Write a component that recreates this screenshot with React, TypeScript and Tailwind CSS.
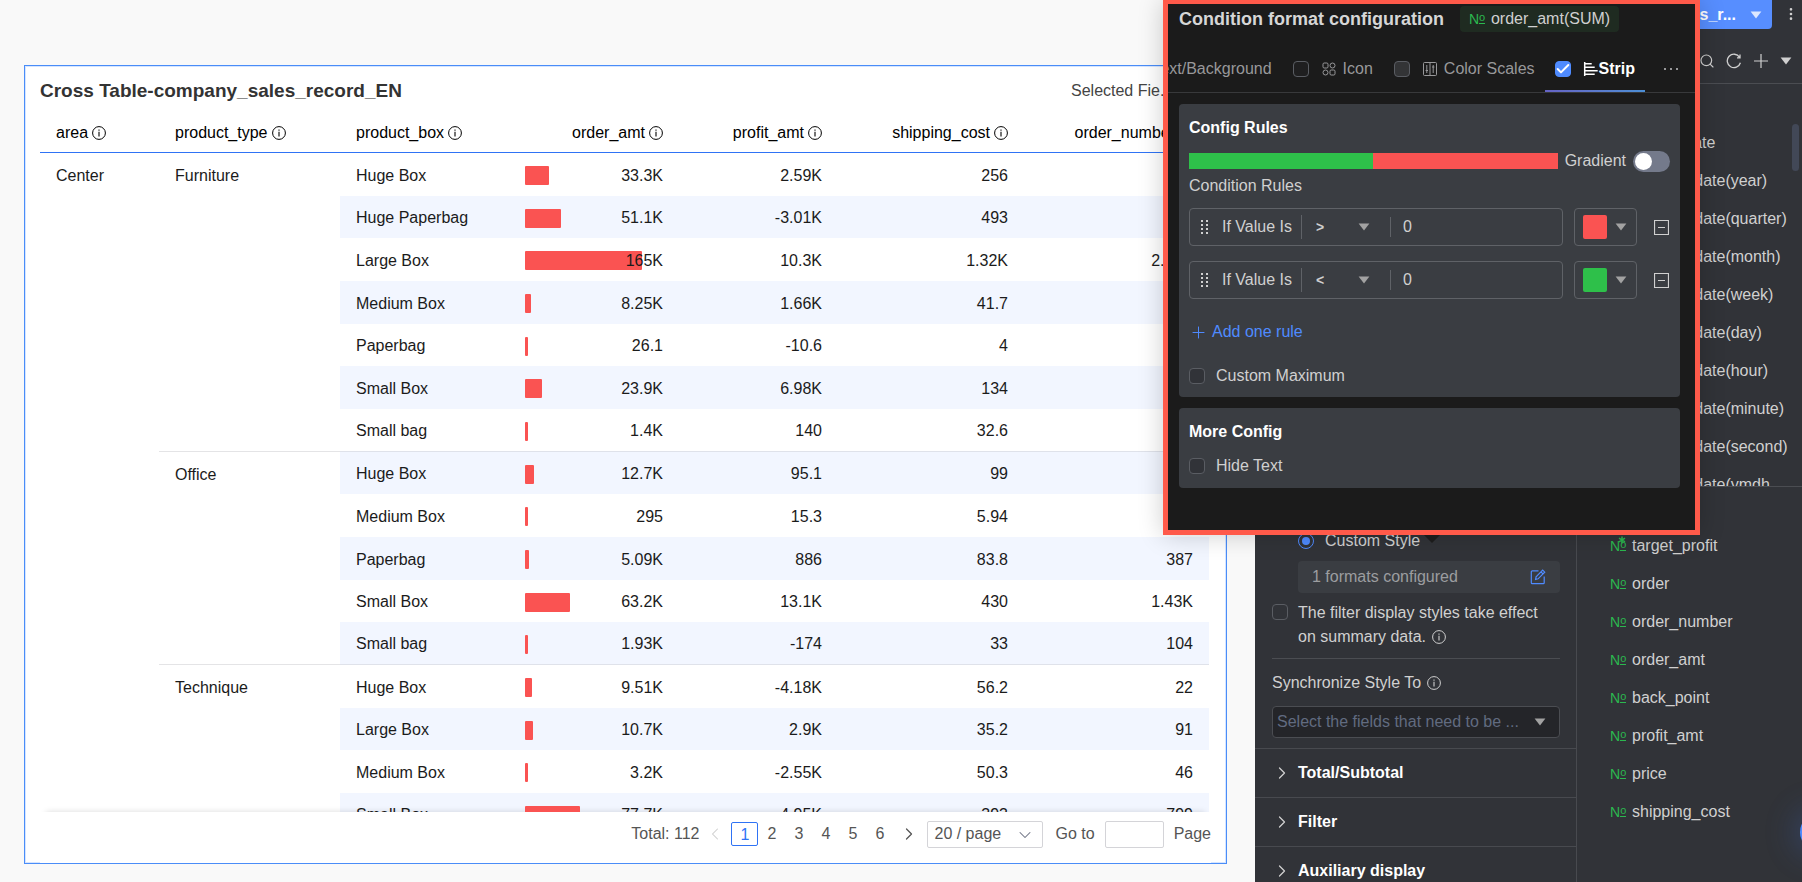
import { useState } from "react";
import clsx from "clsx";
import { Check, ChevronDown, ChevronLeft, ChevronRight, EllipsisVertical, Plus, Search } from "lucide-react";

type Row = { box: string; amt: string; bar: number; profit: string; cost: string; count: string };

const groups: Array<{ type: string; rows: Row[] }> = [
  {
    type: "Furniture",
    rows: [
      { box: "Huge Box", amt: "33.3K", bar: 33.3, profit: "2.59K", cost: "256", count: "" },
      { box: "Huge Paperbag", amt: "51.1K", bar: 51.1, profit: "-3.01K", cost: "493", count: "" },
      { box: "Large Box", amt: "165K", bar: 165, profit: "10.3K", cost: "1.32K", count: "2.94K" },
      { box: "Medium Box", amt: "8.25K", bar: 8.25, profit: "1.66K", cost: "41.7", count: "" },
      { box: "Paperbag", amt: "26.1", bar: 0.03, profit: "-10.6", cost: "4", count: "" },
      { box: "Small Box", amt: "23.9K", bar: 23.9, profit: "6.98K", cost: "134", count: "" },
      { box: "Small bag", amt: "1.4K", bar: 1.4, profit: "140", cost: "32.6", count: "" },
    ],
  },
  {
    type: "Office",
    rows: [
      { box: "Huge Box", amt: "12.7K", bar: 12.7, profit: "95.1", cost: "99", count: "" },
      { box: "Medium Box", amt: "295", bar: 0.3, profit: "15.3", cost: "5.94", count: "" },
      { box: "Paperbag", amt: "5.09K", bar: 5.09, profit: "886", cost: "83.8", count: "387" },
      { box: "Small Box", amt: "63.2K", bar: 63.2, profit: "13.1K", cost: "430", count: "1.43K" },
      { box: "Small bag", amt: "1.93K", bar: 1.93, profit: "-174", cost: "33", count: "104" },
    ],
  },
  {
    type: "Technique",
    rows: [
      { box: "Huge Box", amt: "9.51K", bar: 9.51, profit: "-4.18K", cost: "56.2", count: "22" },
      { box: "Large Box", amt: "10.7K", bar: 10.7, profit: "2.9K", cost: "35.2", count: "91" },
      { box: "Medium Box", amt: "3.2K", bar: 3.2, profit: "-2.55K", cost: "50.3", count: "46" },
      { box: "Small Box", amt: "77.7K", bar: 77.7, profit: "-4.95K", cost: "393", count: "799" },
    ],
  },
];

const columns = [
  { name: "area", width: "w-[119px]", right: false },
  { name: "product_type", width: "w-[181px]", right: false },
  { name: "product_box", width: "w-[169px]", right: false },
  { name: "order_amt", width: "w-[170px]", right: true },
  { name: "profit_amt", width: "w-[159px]", right: true },
  { name: "shipping_cost", width: "w-[186px]", right: true },
  { name: "order_number", width: "w-[185px]", right: true },
];

const dateFields = ["year", "quarter", "month", "week", "day", "hour", "minute", "second", "ymdh"];
const measures = ["order", "order_number", "order_amt", "back_point", "profit_amt", "price", "shipping_cost"];
const rowCount = groups.reduce((sum, group) => sum + group.rows.length, 0);
const maxBar = 165;

function InfoIcon() {
  return (
    <svg className="size-3.5 shrink-0" viewBox="0 0 14 14" fill="none" stroke="currentColor">
      <circle cx="7" cy="7" r="6.4" />
      <path d="M7 5.8v4.6M7 3.4v1.3" strokeWidth="1.1" />
    </svg>
  );
}

function Caret({ className }: { className?: string }) {
  return (
    <svg className={clsx("h-2 w-3 shrink-0", className)} viewBox="0 0 12 8" fill="currentColor">
      <path d="M.6.6h10.8L6 7.4z" />
    </svg>
  );
}

function NumberMark({ starred = false }: { starred?: boolean }) {
  return (
    <span className="relative flex w-4 shrink-0 items-start text-sm leading-4 text-[#2bb84f]">
      N<span className="border-b border-current text-[11px] leading-3">o</span>
      {starred && (
        <svg className="absolute -top-0.5 right-0 size-2" viewBox="0 0 8 8" stroke="currentColor" strokeWidth="1.5">
          <path d="M4 .5v7M1 2.2l6 3.6M7 2.2L1 5.8" />
        </svg>
      )}
    </span>
  );
}

function Checkbox({ id, checked = false, tone = "bg-[#313338]" }: { id: string; checked?: boolean; tone?: string }) {
  return (
    <span className="relative size-4 shrink-0">
      <input
        id={id}
        type="checkbox"
        defaultChecked={checked}
        className={clsx(
          "peer block size-4 appearance-none rounded-sm border border-[#5a5d63] checked:border-[#4f8bff] checked:bg-[#4f8bff]",
          tone,
        )}
      />
      <Check className="pointer-events-none absolute inset-0 hidden size-4 text-white peer-checked:block" strokeWidth={3} />
    </span>
  );
}

function CrossTable() {
  return (
    <table className="w-full table-fixed border-separate border-spacing-0 text-[#1b1b1b]">
      <thead>
        <tr className="h-[39px] text-black">
          {columns.map((col) => (
            <th key={col.name} className={clsx("border-b border-[#2f73f5] px-4 font-normal", col.width)}>
              <span className={clsx("flex items-center gap-1", col.right && "justify-end")}>
                {col.name}
                <InfoIcon />
              </span>
            </th>
          ))}
        </tr>
      </thead>
      <tbody>
        {groups.map((group, g) =>
          group.rows.map((row, r) => {
            const index = groups.slice(0, g).reduce((sum, item) => sum + item.rows.length, 0) + r;
            const last = r === group.rows.length - 1;
            const cell = clsx("px-4 pt-0.5", index % 2 === 1 && "bg-[#f2f6ff]", last && "border-b border-[#dfe2ea]");
            return (
              <tr key={`${group.type}-${row.box}`} className="h-[43px] nth-[3n+2]:h-[42px]">
                {index === 0 && (
                  <td rowSpan={rowCount} className="px-4 align-top leading-[45px]">
                    Center
                  </td>
                )}
                {r === 0 && (
                  <td rowSpan={group.rows.length} className="border-b border-[#e4e4e6] px-4 align-top leading-[45px]">
                    {group.type}
                  </td>
                )}
                <td className={cell}>{row.box}</td>
                <td className={cell}>
                  <div className="relative flex h-[19px] items-center justify-end">
                    <span
                      className="absolute inset-y-0 left-0 rounded-[1px] bg-[#fa5352]"
                      style={{ width: Math.max(3, Math.round((row.bar / maxBar) * 117)) }}
                    />
                    <span className="relative">{row.amt}</span>
                  </div>
                </td>
                <td className={clsx(cell, "text-right")}>{row.profit}</td>
                <td className={clsx(cell, "text-right")}>{row.cost}</td>
                <td className={clsx(cell, "text-right")}>{row.count}</td>
              </tr>
            );
          }),
        )}
      </tbody>
    </table>
  );
}

function Pagination() {
  const [page, setPage] = useState(1);

  return (
    <div className="flex h-[51px] shrink-0 items-start justify-end bg-white pt-2 text-[#555] shadow-[0_-6px_6px_-6px_rgba(0,0,0,0.15)]">
      <div className="flex h-7 items-center">
        <span>Total: 112</span>
        <button className="grid h-6 w-8 place-items-center text-[#ccc]" aria-label="Previous page">
          <ChevronLeft className="size-5" strokeWidth={1.25} />
        </button>
        {[1, 2, 3, 4, 5, 6].map((n) => (
          <button
            key={n}
            onClick={() => setPage(n)}
            className={clsx("h-6 w-[27px] rounded-xs", n === page && "border border-[#2f73f5] text-[#2f73f5]")}
          >
            {n}
          </button>
        ))}
        <button className="grid h-6 w-8 place-items-center" aria-label="Next page">
          <ChevronRight className="size-5" strokeWidth={1.5} />
        </button>
        <span className="relative ml-0.5">
          <select
            aria-label="Page size"
            className="block h-[27px] w-[116px] appearance-none rounded-xs border border-[#d4d4d8] bg-white px-1.5 leading-6"
          >
            <option>20 / page</option>
          </select>
          <ChevronDown className="pointer-events-none absolute top-1 right-2 size-5 text-[#6b7080]" strokeWidth={1.25} />
        </span>
        <label htmlFor="goto" className="ml-3">
          Go to
        </label>
        <input id="goto" className="mx-2.5 h-[27px] w-[59px] rounded-xs border border-[#d4d4d8] bg-white" />
        <span>Page</span>
      </div>
    </div>
  );
}

function Canvas() {
  return (
    <main className="flex min-w-0 flex-1 bg-[#f9f9f9] pt-[65px] pr-7 pb-[18px] pl-6">
      <section className="flex min-w-0 flex-1 flex-col border border-[#4a8df8] bg-white px-[15px] shadow-[inset_0_0_0_1px_#d6e5ff]">
        <header className="flex h-12 shrink-0 items-center justify-between pt-0.5">
          <h1 className="text-[19px] font-bold text-[#333]">Cross Table-company_sales_record_EN</h1>
          <div className="w-[140px] text-[#444]">Selected Fie...</div>
        </header>
        <div className="min-h-0 flex-1 overflow-hidden pr-0.5">
          <CrossTable />
        </div>
        <Pagination />
      </section>
    </main>
  );
}

function StylePanel() {
  return (
    <aside className="flex w-[322px] shrink-0 flex-col border-r border-[#484a4f] pt-[529px]">
      <div className="pr-4 pl-[17px]">
        <label className="flex h-6 items-center gap-[11px] pl-[26px]">
          <input
            type="radio"
            name="style"
            defaultChecked
            className="size-4 appearance-none rounded-full border border-[#4f8bff] bg-[#4f8bff] bg-clip-content p-[3px]"
          />
          Custom Style
        </label>
        <div className="mt-2 ml-[26px] flex h-8 items-center justify-between rounded-sm bg-[#3a3d42] px-3.5 text-[#9c9da0]">
          1 formats configured
          <button aria-label="Edit formats" className="text-[#4f8bff]">
            <svg className="size-4" viewBox="0 0 16 16" fill="none" stroke="currentColor" strokeWidth="1.2">
              <path d="M8.5 1.8H2.2a.9.9 0 0 0-.9.9v11.1c0 .5.4.9.9.9h11.1c.5 0 .9-.4.9-.9V7.5" />
              <path d="M5.6 10.4l.5-2.6 6.6-6.6 2 2-6.6 6.6zM11 2.9l2 2" />
            </svg>
          </button>
        </div>
        <div className="mt-2 flex gap-2.5 leading-6">
          <span className="pt-[3px]">
            <Checkbox id="summary" />
          </span>
          <label htmlFor="summary">
            The filter display styles take effect
            <span className="flex items-center gap-1.5">
              on summary data. <InfoIcon />
            </span>
          </label>
        </div>
        <div className="mt-[9px] border-t border-[#4b4d52] pt-3 pb-2.5">
          <label htmlFor="sync" className="flex h-6 items-center gap-1.5">
            Synchronize Style To <InfoIcon />
          </label>
          <div className="relative mt-[11px]">
            <select
              id="sync"
              className="h-8 w-full appearance-none rounded-sm border border-[#4b4d52] bg-[#242529] pr-8 pl-1 text-[#616b80]"
            >
              <option>Select the fields that need to be ...</option>
            </select>
            <Caret className="pointer-events-none absolute top-3 right-3.5 text-[#a2a2a2]" />
          </div>
        </div>
      </div>
      {["Total/Subtotal", "Filter", "Auxiliary display"].map((name) => (
        <button
          key={name}
          className="flex h-[49px] shrink-0 items-center gap-1.5 border-t border-[#484a4f] pl-[17px] text-left font-bold text-white"
        >
          <ChevronRight className="size-5 text-[#d0d0d0]" strokeWidth={1.5} />
          {name}
        </button>
      ))}
    </aside>
  );
}

function FieldsPanel() {
  return (
    <aside className="flex w-[225px] shrink-0 flex-col">
      <div className="flex h-[29px] shrink-0 items-start justify-between pr-[3px]">
        <button className="flex h-[29px] w-[195px] items-center justify-end gap-3.5 rounded-b bg-[#578eff] pr-2.5 font-bold text-white">
          sales_r...
          <Caret className="text-[#dce7ff]" />
        </button>
        <button aria-label="More" className="h-[27px]">
          <EllipsisVertical className="size-4" />
        </button>
      </div>
      <div className="flex h-[55px] shrink-0 items-center justify-end gap-[11px] border-b border-[#4b4d52] pt-2.5 pr-2.5">
        <button aria-label="Search">
          <Search className="size-4" strokeWidth={1.75} />
        </button>
        <button aria-label="Refresh">
          <svg className="size-4" viewBox="0 0 16 16" fill="none" stroke="currentColor" strokeWidth="1.3">
            <path d="M14.4 9.8A6.7 6.7 0 1 1 13.6 4.3M14 1.6v3.2h-3" />
          </svg>
        </button>
        <button aria-label="Add">
          <svg className="size-4" viewBox="0 0 16 16" stroke="currentColor" strokeWidth="1.2">
            <path d="M8 1v14M1 8h14" />
          </svg>
        </button>
        <button aria-label="Options">
          <Caret />
        </button>
      </div>
      <div className="flex h-[403px] shrink-0 justify-between overflow-hidden border-b border-[#4b4d52] pr-[3px]">
        <ul className="pt-10 pl-[61px] leading-[38px]">
          <li>order_date</li>
          {dateFields.map((name) => (
            <li key={name} className="whitespace-nowrap pl-2.5">
              {name === "ymdh" ? "order_date(ymdh" : `order_date(${name})`}
            </li>
          ))}
        </ul>
        <div className="mt-10 h-[47px] w-[7px] shrink-0 rounded-full bg-[#424857]" />
      </div>
      <ul className="pt-10 pl-[33px] leading-[38px]">
        <li className="flex items-center gap-1.5">
          <NumberMark starred />
          target_profit
        </li>
        {measures.map((name) => (
          <li key={name} className="flex items-center gap-1.5">
            <NumberMark />
            {name}
          </li>
        ))}
      </ul>
    </aside>
  );
}

function Rule({ op, swatch }: { op: string; swatch: string }) {
  return (
    <div className="flex items-center">
      <div className="flex h-[38px] min-w-0 flex-1 items-center rounded-sm border border-[#5f6267]">
        <svg className="ml-2.5 h-4 w-2 shrink-0" viewBox="0 0 8 16" fill="currentColor">
          {[1, 5, 9, 13].map((y) => (
            <path key={y} d={`M1 ${y}h2v2H1zM6 ${y}h2v2H6z`} />
          ))}
        </svg>
        <span className="ml-3.5 w-20 border-r border-[#5f6267] whitespace-nowrap">If Value Is</span>
        <span className="relative w-[89px] border-r border-[#5f6267]">
          <select aria-label="Operator" defaultValue={op} className="block w-full appearance-none bg-transparent pl-3.5 text-sm leading-5 font-bold">
            <option>&gt;</option>
            <option>&lt;</option>
          </select>
          <Caret className="pointer-events-none absolute top-1.5 right-5 text-[#a2a2a2]" />
        </span>
        <input aria-label="Value" defaultValue="0" className="min-w-0 flex-1 bg-transparent px-3 outline-none" />
      </div>
      <button
        aria-label="Strip color"
        className="ml-[11px] flex h-[38px] w-[63px] items-center gap-2 rounded-sm border border-[#5f6267] pl-2 text-[#a2a2a2]"
      >
        <span className={clsx("size-6 rounded-xs", swatch)} />
        <Caret />
      </button>
      <button aria-label="Remove rule" className="ml-[17px]">
        <svg className="size-[15px]" viewBox="0 0 15 15" fill="none" stroke="currentColor">
          <path d="M.5.5h14v14H.5zM4 7.5h7" strokeWidth="1.2" />
        </svg>
      </button>
    </div>
  );
}

function ConditionDialog() {
  return (
    <div
      role="dialog"
      aria-label="Condition format configuration"
      className="absolute top-0 right-[102px] h-[535px] w-[537px] border-[5px] border-t-4 border-[#ff5a4a] bg-[#1b1b1b] shadow-[0_0_24px_rgba(0,0,0,0.2)]"
    >
      <div className="flex h-[30px] items-center gap-4 pl-[11px]">
        <h2 className="text-lg font-bold whitespace-nowrap text-[#d6d6d6]">Condition format configuration</h2>
        <span className="flex h-[26px] items-center gap-1.5 rounded-sm bg-[#1f2b21] px-[9px]">
          <NumberMark />
          order_amt(SUM)
        </span>
      </div>
      <div className="mt-2 flex h-[51px] items-stretch justify-end overflow-hidden border-b border-[#38393b] pt-1 pr-4 whitespace-nowrap text-[#98989a]">
        <div className="flex shrink-0 items-center gap-3.5 px-2.5">
          <Checkbox id="tab-text" />
          <label htmlFor="tab-text">Text/Background</label>
        </div>
        <div className="flex shrink-0 items-center gap-[13px] px-[11px]">
          <Checkbox id="tab-icon" tone="bg-[#1f1f20]" />
          <label htmlFor="tab-icon" className="flex items-center gap-[7px]">
            <svg className="size-3.5" viewBox="0 0 14 14" fill="none" stroke="currentColor">
              <rect x="1" y="1" width="5" height="5" rx="1.2" />
              <circle cx="10.5" cy="3.5" r="2.5" />
              <circle cx="3.5" cy="10.5" r="2.5" />
              <rect x="8" y="8" width="5" height="5" rx="1.2" />
            </svg>
            Icon
          </label>
        </div>
        <div className="flex shrink-0 items-center gap-[13px] px-2.5">
          <Checkbox id="tab-scales" tone="bg-[#333436]" />
          <label htmlFor="tab-scales" className="flex items-center gap-[7px]">
            <svg className="size-3.5" viewBox="0 0 14 14" fill="none" stroke="currentColor">
              <rect x=".5" y=".5" width="13" height="13" rx="1" />
              <path d="M3.8 3v8M7 .5v13M10.2 3v8M2.6 8.5H5M9 5h2.4" />
            </svg>
            Color Scales
          </label>
        </div>
        <div className="relative flex shrink-0 items-center gap-3 px-2.5">
          <Checkbox id="tab-strip" checked />
          <label htmlFor="tab-strip" className="flex items-center font-bold text-white">
            <svg className="h-3.5 w-4" viewBox="0 0 16 14" fill="none" stroke="currentColor" strokeWidth="1.5">
              <path d="M1.7 0v14M1.7 1.7h7M1.7 5.2h10M1.7 8.7h13M1.7 12.3h10" />
            </svg>
            Strip
          </label>
          <span className="absolute inset-x-0 bottom-0 h-0.5 bg-linear-to-r from-[#6563c4] to-[#4b8fd6]" />
        </div>
        <button aria-label="More tabs" className="ml-[18px]">
          <svg className="h-1 w-4" viewBox="0 0 16 4" fill="currentColor">
            <path d="M1 1h2v2H1zM7 1h2v2H7zM13 1h2v2h-2z" />
          </svg>
        </button>
      </div>

      <div className="grid grid-cols-1 gap-[11px] pt-[11px] pr-[15px] pl-[11px]">
        <section className="flex h-[293px] flex-col rounded-sm bg-[#3a3d42] px-2.5 pt-3">
          <h3 className="leading-6 font-bold text-white">Config Rules</h3>
          <div className="mt-2.5 flex h-[22px] items-center">
            <div className="flex h-4 flex-1">
              <span className="flex-1 bg-[#2ec04a]" />
              <span className="flex-1 bg-[#fa5352]" />
            </div>
            <label htmlFor="gradient" className="mx-[7px]">
              Gradient
            </label>
            <span className="relative h-[21px] w-[37px]">
              <input id="gradient" type="checkbox" role="switch" className="peer block h-full w-full appearance-none rounded-full bg-[#747a8b]" />
              <span className="pointer-events-none absolute top-0.5 left-0.5 size-[17px] rounded-full bg-white peer-checked:left-[18px]" />
            </span>
          </div>
          <p className="mt-0.5 h-[26px] leading-6">Condition Rules</p>
          <div className="mt-2 grid grid-cols-1 gap-[15px] pr-px">
            <Rule op=">" swatch="bg-[#fa5352]" />
            <Rule op="<" swatch="bg-[#2ec04a]" />
          </div>
          <button className="mt-[21px] flex h-6 items-center gap-1 text-[#4f8bff]">
            <Plus className="size-[19px]" strokeWidth={1.25} />
            Add one rule
          </button>
          <div className="mt-5 flex h-6 items-center gap-[11px]">
            <Checkbox id="custom-max" />
            <label htmlFor="custom-max">Custom Maximum</label>
          </div>
        </section>
        <section className="h-20 rounded-sm bg-[#3a3d42] px-2.5 pt-3">
          <h3 className="leading-6 font-bold text-white">More Config</h3>
          <div className="mt-2.5 flex h-6 items-center gap-[11px]">
            <Checkbox id="hide-text" />
            <label htmlFor="hide-text">Hide Text</label>
          </div>
        </section>
      </div>
      <svg className="absolute top-full left-1/2 mt-[5px] h-2 w-4 -translate-x-1/2 text-[#1b1b1b]" viewBox="0 0 16 8" fill="currentColor">
        <path d="M0 0h16L8 8z" />
      </svg>
    </div>
  );
}

export default function App() {
  return (
    <div className="relative flex h-screen overflow-hidden bg-[#313338] font-['Liberation_Sans',Arial,sans-serif] text-base text-[#d0d0d0]">
      <Canvas />
      <StylePanel />
      <FieldsPanel />
      <button
        aria-label="Help"
        className="absolute right-[-34px] bottom-8 size-9 rounded-full bg-[#4f8bff] shadow-[0_0_30px_6px_rgba(60,100,190,0.3)]"
      />
      <ConditionDialog />
    </div>
  );
}
